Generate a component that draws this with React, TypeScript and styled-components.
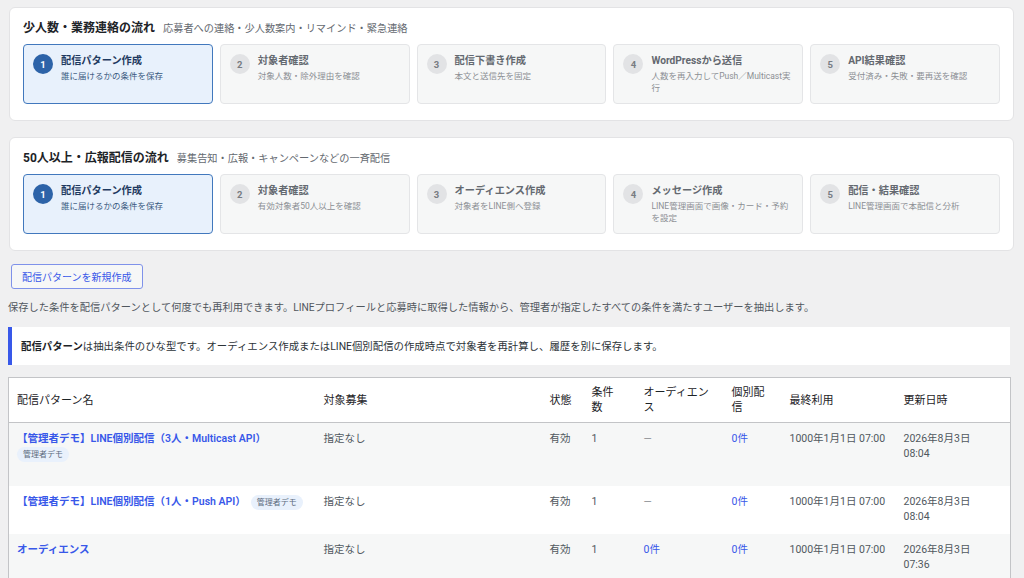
import React from 'react';
import styled, { createGlobalStyle, css } from 'styled-components';

const GlobalStyle = createGlobalStyle`
  html, body {
    margin: 0;
    padding: 0;
    background: #f0f0f1;
  }
  body {
    font-family: Roboto, "Noto Sans CJK JP", sans-serif;
    color: #2c3338;
    overflow: hidden;
  }
  * {
    box-sizing: border-box;
  }
`;

interface Step {
  no: number;
  title: string;
  desc: string;
}

interface Flow {
  title: string;
  sub: string;
  steps: Step[];
}

const flows: Flow[] = [
  {
    title: '少人数・業務連絡の流れ',
    sub: '応募者への連絡・少人数案内・リマインド・緊急連絡',
    steps: [
      { no: 1, title: '配信パターン作成', desc: '誰に届けるかの条件を保存' },
      { no: 2, title: '対象者確認', desc: '対象人数・除外理由を確認' },
      { no: 3, title: '配信下書き作成', desc: '本文と送信先を固定' },
      { no: 4, title: 'WordPressから送信', desc: '人数を再入力してPush／Multicast実行' },
      { no: 5, title: 'API結果確認', desc: '受付済み・失敗・要再送を確認' },
    ],
  },
  {
    title: '50人以上・広報配信の流れ',
    sub: '募集告知・広報・キャンペーンなどの一斉配信',
    steps: [
      { no: 1, title: '配信パターン作成', desc: '誰に届けるかの条件を保存' },
      { no: 2, title: '対象者確認', desc: '有効対象者50人以上を確認' },
      { no: 3, title: 'オーディエンス作成', desc: '対象者をLINE側へ登録' },
      { no: 4, title: 'メッセージ作成', desc: 'LINE管理画面で画像・カード・予約を設定' },
      { no: 5, title: '配信・結果確認', desc: 'LINE管理画面で本配信と分析' },
    ],
  },
];

interface Row {
  name: string;
  badge?: 'block' | 'inline';
  target: string;
  status: string;
  count: string;
  audience: string | null;
  direct: string;
  lastUsed: string;
  updatedDate: string;
  updatedTime: string;
}

const rows: Row[] = [
  {
    name: '【管理者デモ】LINE個別配信（3人・Multicast API）',
    badge: 'block',
    target: '指定なし',
    status: '有効',
    count: '1',
    audience: null,
    direct: '0件',
    lastUsed: '1000年1月1日 07:00',
    updatedDate: '2026年8月3日',
    updatedTime: '08:04',
  },
  {
    name: '【管理者デモ】LINE個別配信（1人・Push API）',
    badge: 'inline',
    target: '指定なし',
    status: '有効',
    count: '1',
    audience: null,
    direct: '0件',
    lastUsed: '1000年1月1日 07:00',
    updatedDate: '2026年8月3日',
    updatedTime: '08:04',
  },
  {
    name: 'オーディエンス',
    target: '指定なし',
    status: '有効',
    count: '1',
    audience: '0件',
    direct: '0件',
    lastUsed: '1000年1月1日 07:00',
    updatedDate: '2026年8月3日',
    updatedTime: '07:36',
  },
];

const Page = styled.div`
  padding: 7px 10px 0 8px;
`;

const FlowPanel = styled.section`
  margin: 0 0 16px 1px;
  padding: 12px 13px 16px;
  background: #fff;
  border: 1px solid #e3e3e5;
  border-radius: 6px;
`;

const FlowHeading = styled.div`
  display: flex;
  align-items: baseline;
  gap: 8px;
  height: 16px;
  margin-bottom: 8px;
  white-space: nowrap;
`;

const FlowTitle = styled.h2`
  margin: 0;
  font-size: 12px;
  line-height: 16px;
  font-weight: 700;
  color: #1d2327;
`;

const FlowSub = styled.span`
  font-size: 10.2px;
  color: #646970;
`;

const StepGrid = styled.div`
  display: grid;
  grid-template-columns: repeat(5, 1fr);
  gap: 7px;
`;

const StepCard = styled.div<{ $active?: boolean }>`
  display: flex;
  align-items: flex-start;
  gap: 8px;
  height: 60px;
  padding: 8px 9px;
  border-radius: 4px;
  border: 1px solid #e4e5e7;
  background: #f6f7f7;
  ${p =>
    p.$active &&
    css`
      border: 1.5px solid #4178bd;
      background: #e8f1fc;
    `}
`;

const StepNo = styled.span<{ $active?: boolean }>`
  flex: none;
  width: 20px;
  height: 20px;
  margin-top: 1px;
  border-radius: 50%;
  display: flex;
  align-items: center;
  justify-content: center;
  font-size: 9.5px;
  font-weight: 700;
  background: ${p => (p.$active ? '#2d63a8' : '#e2e3e5')};
  color: ${p => (p.$active ? '#fff' : '#787c82')};
`;

const StepBody = styled.div`
  min-width: 0;
  padding-top: 1px;
`;

const StepTitle = styled.div<{ $active?: boolean }>`
  font-size: 10.2px;
  line-height: 14px;
  font-weight: 700;
  color: ${p => (p.$active ? '#1f3a60' : '#646970')};
  white-space: nowrap;
`;

const StepDesc = styled.div<{ $active?: boolean }>`
  margin-top: 2px;
  font-size: 8.5px;
  line-height: 12px;
  color: ${p => (p.$active ? '#3a5a80' : '#8c8f94')};
`;

const NewButton = styled.button`
  display: block;
  margin: -3px 0 0 3px;
  height: 25px;
  padding: 0 10px;
  font-family: inherit;
  font-size: 10px;
  color: #3858e9;
  background: #f6f7f7;
  border: 1px solid #7f92ea;
  border-radius: 3px;
`;

const Lead = styled.p`
  margin: 11px 0 12px;
  font-size: 10.25px;
  line-height: 15px;
  color: #50575e;
  white-space: nowrap;
`;

const Notice = styled.div`
  margin: 0 4px 12px 0;
  padding: 11.5px 9px;
  background: #fff;
  border-left: 4px solid #3858e9;
  font-size: 10.4px;
  line-height: 15px;
  color: #2c3338;

  strong {
    color: #1d2327;
    font-weight: 700;
  }
`;

const Table = styled.table`
  width: calc(100% - 4px);
  table-layout: fixed;
  border-collapse: collapse;
  border: 1px solid #c3c4c7;
  background: #fff;
`;

const Th = styled.th`
  padding: 7px 9px 7px 8px;
  height: 45px;
  text-align: left;
  vertical-align: middle;
  font-size: 11px;
  line-height: 15px;
  font-weight: 400;
  color: #1d2327;
  white-space: nowrap;
  border-bottom: 1px solid #c3c4c7;

  &:not(:first-child) {
    padding-left: 9px;
  }
`;

const Tr = styled.tr<{ $striped?: boolean }>`
  background: ${p => (p.$striped ? '#f6f7f7' : '#fff')};
`;

const Td = styled.td<{ $nowrap?: boolean }>`
  padding: 8px 9px 9px;
  vertical-align: top;
  font-size: 10.5px;
  line-height: 15px;
  color: #50575e;
  ${p => p.$nowrap && 'white-space: nowrap;'}

  &:first-child {
    padding-left: 8px;
  }
`;

const NameLink = styled.a`
  color: #3858e9;
  font-weight: 600;
  text-decoration: none;
`;

const CountLink = styled.a`
  color: #3858e9;
  text-decoration: none;
`;

const Badge = styled.span<{ $inline?: boolean }>`
  display: inline-block;
  height: 15px;
  padding: 0 6px;
  border-radius: 8px;
  background: #e9f1fc;
  color: #5d6c7e;
  font-size: 8px;
  line-height: 15px;
  font-weight: 400;
  vertical-align: middle;
  ${p => (p.$inline ? 'margin-left: 5px;' : 'margin-top: 1px;')}
`;

const RowActions = styled.div`
  height: 15px;
  visibility: hidden;
`;

const Dash = styled.span`
  color: #8c8f94;
`;

const columns = [
  { label: '配信パターン名', width: 306 },
  { label: '対象募集', width: 226 },
  { label: '状態', width: 42 },
  { label: ['条件', '数'], width: 52 },
  { label: ['オーディエン', 'ス'], width: 88 },
  { label: ['個別配', '信'], width: 58 },
  { label: '最終利用', width: 114 },
  { label: '更新日時', width: 116 },
];

const App = (): JSX.Element => {
  return (
    <>
      <GlobalStyle />
      <Page>
        {flows.map(flow => (
          <FlowPanel key={flow.title}>
            <FlowHeading>
              <FlowTitle>{flow.title}</FlowTitle>
              <FlowSub>{flow.sub}</FlowSub>
            </FlowHeading>
            <StepGrid>
              {flow.steps.map(step => {
                const active = step.no === 1;
                return (
                  <StepCard key={step.no} $active={active}>
                    <StepNo $active={active}>{step.no}</StepNo>
                    <StepBody>
                      <StepTitle $active={active}>{step.title}</StepTitle>
                      <StepDesc $active={active}>{step.desc}</StepDesc>
                    </StepBody>
                  </StepCard>
                );
              })}
            </StepGrid>
          </FlowPanel>
        ))}

        <NewButton>配信パターンを新規作成</NewButton>

        <Lead>
          保存した条件を配信パターンとして何度でも再利用できます。LINEプロフィールと応募時に取得した情報から、管理者が指定したすべての条件を満たすユーザーを抽出します。
        </Lead>

        <Notice>
          <strong>配信パターン</strong>
          は抽出条件のひな型です。オーディエンス作成またはLINE個別配信の作成時点で対象者を再計算し、履歴を別に保存します。
        </Notice>

        <Table>
          <colgroup>
            {columns.map((c, i) => (
              <col key={i} style={{ width: c.width }} />
            ))}
          </colgroup>
          <thead>
            <tr>
              {columns.map((c, i) => (
                <Th key={i}>
                  {Array.isArray(c.label) ? (
                    <>
                      {c.label[0]}
                      <br />
                      {c.label[1]}
                    </>
                  ) : (
                    c.label
                  )}
                </Th>
              ))}
            </tr>
          </thead>
          <tbody>
            {rows.map((row, i) => (
              <Tr key={i} $striped={i % 2 === 0}>
                <Td $nowrap>
                  <NameLink href="#">{row.name}</NameLink>
                  {row.badge === 'inline' && <Badge $inline>管理者デモ</Badge>}
                  {row.badge === 'block' && (
                    <div>
                      <Badge>管理者デモ</Badge>
                    </div>
                  )}
                  <RowActions>編集 | 複製 | 削除</RowActions>
                </Td>
                <Td>{row.target}</Td>
                <Td $nowrap>{row.status}</Td>
                <Td>{row.count}</Td>
                <Td>{row.audience ? <CountLink href="#">{row.audience}</CountLink> : <Dash>—</Dash>}</Td>
                <Td>
                  <CountLink href="#">{row.direct}</CountLink>
                </Td>
                <Td $nowrap>{row.lastUsed}</Td>
                <Td $nowrap>
                  {row.updatedDate}
                  <br />
                  {row.updatedTime}
                </Td>
              </Tr>
            ))}
          </tbody>
        </Table>
      </Page>
    </>
  );
};

export default App;
